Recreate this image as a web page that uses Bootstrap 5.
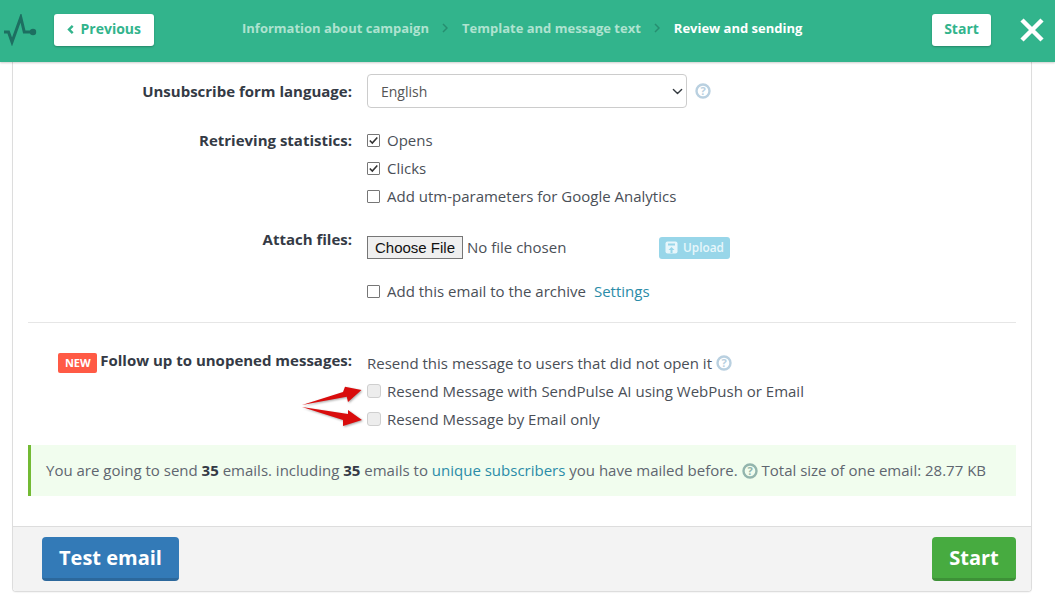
<!DOCTYPE html>
<html lang="en">
<head>
<meta charset="utf-8">
<title>Review and sending</title>
<link href="https://cdn.jsdelivr.net/npm/bootstrap@5.3.0/dist/css/bootstrap.min.css" rel="stylesheet">
<style>
html,body{height:603px;overflow:hidden;background:#fff}
body{font-family:"Open Sans",sans-serif;font-size:15px;color:#4a4f57;position:relative}
.topbar{height:62px;background:#32b48c;box-shadow:0 1px 2px rgba(0,0,0,.2);padding:14px 11px 0 4px;position:relative;z-index:2}
.logo{width:34px;height:32px;margin-right:16px}
.whitebtn{height:32px;background:#fff;border:0;border-radius:3px;color:#32b48c;font-weight:700;font-size:14px;box-shadow:0 1px 2px rgba(0,0,0,.25);padding:0 13px 2px;line-height:30px}
.prevbtn{width:100px;gap:7px}
.startbtn{width:59px;padding:0 0 2px;text-align:center}
.steps{margin-left:88px;margin-top:-1px;font-size:13px;font-weight:700;line-height:30px;color:#aee3d0;gap:13.500px}
.steps .cur{color:#fff}
.sep{width:6px;height:10px}
.closex{width:24px;height:24px;margin-left:29px;margin-top:4px}
.spacer{flex:1}
.panel{margin:0 23px 0 12px;width:1020px;height:530px;border:1px solid #ddd;border-top:0;border-radius:0 0 4px 4px;box-shadow:0 1px 1px rgba(0,0,0,.04);display:flex;flex-direction:column}
.bodyarea{flex:1;padding:12px 15px 0}
.frow{display:flex;gap:15px}
.flabel{width:324px;flex:none;text-align:right;font-weight:700;color:#343a45;font-size:15px;line-height:20px}
.fctl{flex:1;min-width:0}
.gaprow-a{margin-top:18px}
.gaprow-b{margin-top:19px}
.retr-label{padding-top:4px}
.follow-label{margin-top:-1px}
.langsel{width:320px;height:34px;font-size:14px;padding:0 13px;color:#555;border-color:#ccc;border-radius:4px;font-family:"Open Sans",sans-serif;background-position:right 3px center;background-size:11px 11px}
.qmark{width:16px;height:16px;flex:none}
.qtxt{font:700 11px "Open Sans",sans-serif;text-anchor:middle}
.chk{height:28px;display:flex;align-items:center;gap:7px;margin:0;line-height:20px}
.chk input{appearance:none;-webkit-appearance:none;width:13px;height:13px;margin:0;flex:none;background:#fff;border:1px solid #767676;border-radius:1px}
.chk input:checked{background:#fff url("data:image/svg+xml,%3csvg xmlns='http://www.w3.org/2000/svg' viewBox='0 0 11 11'%3e%3cpath d='M1.800 5.500 4.300 8l5-5.500' fill='none' stroke='%23333' stroke-width='1.600'/%3e%3c/svg%3e") center/11px 11px no-repeat}
.chk input:disabled{width:14px;height:14px;background:#ededed;border-color:#cfcfcf;border-radius:3px;margin-right:-1px}
.filerow{height:24px;width:363px;margin-top:6px}
.filein{font-size:15px;font-family:"Open Sans",sans-serif;color:#4a4f57;width:292px}
.filein::file-selector-button{font:15px "Liberation Sans",sans-serif;background:#efefef;border:1px solid #767676;border-radius:0;color:#111;height:23px;width:96px;padding:0;margin-right:4px}
.uploadbtn{background:#98d6e9;color:#e7f6fb;height:22px;width:71px;border-radius:3px;font-size:11.800px;font-weight:600;gap:5px;border:0;padding:0;margin-top:1px}
.archive{margin-top:18px}
.linkish{color:#2a8ca8;text-decoration:none}
.archive .linkish{margin-left:1px}
.divline{border-top:1px solid #e6e6e6;margin:17px 0 28px;opacity:1}
.resendline{height:20px;margin-top:2px;margin-bottom:4px}
.newtag{background:#ff5a45;color:#fff;font-size:11px;font-weight:700;border-radius:2px;padding:0 6px;height:20px;line-height:20px;width:39px;margin-right:3px;display:inline-block;text-align:center;vertical-align:-1px}
.notice{margin-top:12px;height:51px;background:#f1fdee;border-left:3px solid #73ba34;padding:0 15px;line-height:50px;font-size:15px;color:#5f6670;white-space:nowrap}
.notice b{color:#343a45}
.notice .qmark{vertical-align:-3px}
.footbar{height:65px;background:#f3f3f3;border-top:1px solid #ddd;padding:10px 15px 0 29px;display:flex;justify-content:space-between;border-radius:0 0 4px 4px}
.bigbtn{height:44px;border:0;border-bottom:3px solid;border-radius:4px;color:#fff;font-weight:700;font-size:20px;padding:0;line-height:40px}
.testbtn{width:137px;background:#337ab7;border-bottom-color:#2c689c}
.gobtn{width:84px;background:#47ab40;border-bottom-color:#3d9137}
.arrows{position:absolute;left:298px;top:380px;width:66px;height:50px;z-index:3;filter:drop-shadow(1px 1px 1px rgba(0,0,0,.35))}
</style>
</head>
<body>
<header class="topbar d-flex align-items-start">
  <svg class="logo" viewBox="0 0 34 32" fill="none"><path d="M0 18h4.500L8 28 16.800 3.500 20.300 18H29" stroke="#1d6f61" stroke-width="3"/><circle cx="29" cy="18" r="3.200" fill="#1d6f61"/></svg>
  <button class="whitebtn prevbtn d-flex align-items-center" type="button"><svg width="8" height="11" viewBox="0 0 8 11" fill="none"><path d="M7 1 2.500 5.500 7 10" stroke="#32b48c" stroke-width="3"/></svg>Previous</button>
  <nav class="steps d-flex align-items-center">
    <span>Information about campaign</span>
    <svg class="sep" viewBox="0 0 6 10" fill="none"><path d="M1 1l4 4-4 4" stroke="#268e70" stroke-width="1.500"/></svg>
    <span>Template and message text</span>
    <svg class="sep" viewBox="0 0 6 10" fill="none"><path d="M1 1l4 4-4 4" stroke="#268e70" stroke-width="1.500"/></svg>
    <span class="cur">Review and sending</span>
  </nav>
  <div class="spacer"></div>
  <button class="whitebtn startbtn" type="button">Start</button>
  <svg class="closex" viewBox="0 0 24 24" fill="none"><path d="M2 2l20 20M22 2 2 22" stroke="#fff" stroke-width="4.500"/></svg>
</header>

<main class="panel">
  <div class="bodyarea">
    <div class="frow align-items-center">
      <div class="flabel">Unsubscribe form language:</div>
      <div class="fctl d-flex align-items-center gap-2">
        <select class="form-select langsel"><option>English</option></select>
        <svg class="qmark" viewBox="0 0 16 16"><circle cx="8" cy="8" r="6.500" fill="none" stroke="#b9d0e0" stroke-width="2.400"/><text x="8" y="12" class="qtxt" fill="#b9d0e0">?</text></svg>
      </div>
    </div>
    <div class="frow gaprow-a">
      <div class="flabel retr-label">Retrieving statistics:</div>
      <div class="fctl">
        <label class="chk"><input type="checkbox" checked>Opens</label>
        <label class="chk"><input type="checkbox" checked>Clicks</label>
        <label class="chk"><input type="checkbox">Add utm-parameters for Google Analytics</label>
      </div>
    </div>
    <div class="frow gaprow-b">
      <div class="flabel">Attach files:</div>
      <div class="fctl">
        <div class="filerow d-flex align-items-center justify-content-between">
          <input class="filein" type="file">
          <button class="uploadbtn d-flex align-items-center justify-content-center" type="button"><svg width="13" height="13" viewBox="0 0 13 13"><rect x=".5" y=".5" width="12" height="12" rx="2" fill="#e7f6fb"/><rect x="3" y="2.500" width="7" height="2" fill="#98d6e9"/><path d="M6.500 6 3.500 9h2v3h2V9h2z" fill="#98d6e9"/></svg>Upload</button>
        </div>
        <label class="chk archive">
          <input type="checkbox">Add this email to the archive<a class="linkish" href="#">Settings</a>
        </label>
      </div>
    </div>
    <hr class="divline">
    <div class="frow">
      <div class="flabel follow-label"><span class="newtag">NEW</span>Follow up to unopened messages:</div>
      <div class="fctl">
        <div class="resendline d-flex align-items-center gap-1">Resend this message to users that did not open it
          <svg class="qmark" viewBox="0 0 16 16"><circle cx="8" cy="8" r="6.500" fill="none" stroke="#b9d0e0" stroke-width="2.400"/><text x="8" y="12" class="qtxt" fill="#b9d0e0">?</text></svg>
        </div>
        <label class="chk"><input type="checkbox" disabled><span>Resend Message with SendPulse AI using WebPush or Email</span></label>
        <label class="chk"><input type="checkbox" disabled><span>Resend Message by Email only</span></label>
      </div>
    </div>
    <div class="notice">You are going to send <b>35</b> emails. including <b>35</b> emails to <a class="linkish" href="#">unique subscribers</a> you have mailed before. <svg class="qmark" viewBox="0 0 16 16"><circle cx="8" cy="8" r="6.500" fill="none" stroke="#93b5ad" stroke-width="2.400"/><text x="8" y="12" class="qtxt" fill="#93b5ad">?</text></svg> Total size of one email: 28.77 KB</div>
  </div>
  <div class="footbar">
    <button class="bigbtn testbtn" type="button">Test email</button>
    <button class="bigbtn gobtn" type="button">Start</button>
  </div>
</main>

<svg class="arrows" viewBox="0 0 66 50">
  <path d="M4 25 45 12 47 6.700 63.500 10 50 22 48.700 16.700Z" fill="#d90c0c"/>
  <path d="M4 27 50 34 50 30 64 40 45 46 45 40Z" fill="#d90c0c"/>
</svg>
</body>
</html>
